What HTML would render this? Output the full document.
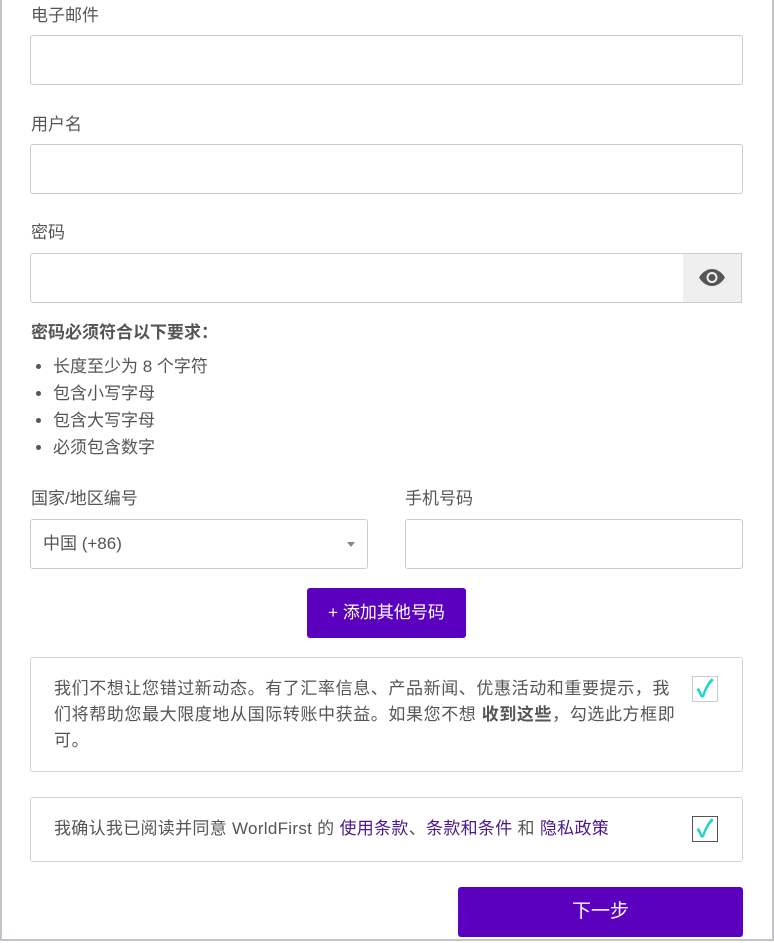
<!DOCTYPE html>
<html><head><meta charset="utf-8"><style>
body{margin:0;width:774px;height:943px;overflow:hidden;background:#fff;font-family:"Liberation Sans","Noto Sans CJK SC",sans-serif;color:#555;font-size:17px;position:relative}
.frame{position:absolute;left:0;top:0;width:770px;height:939px;border:2px solid #c4c3cc;border-top:none}
.a{position:absolute;line-height:20px}
.in{position:absolute;border:1px solid #ccc;border-radius:3px;box-sizing:border-box;background:#fff}
.box{position:absolute;border:1px solid #d4d4d4;border-radius:3px;box-sizing:border-box;left:30px;width:713px}
.cb{position:absolute;width:26px;height:26px;border:1px solid #ccc;box-sizing:border-box;color:#1dd6c8;font-size:24px;line-height:26px;text-align:center;font-weight:bold}
.btn{position:absolute;background:#5c00bf;color:#fff;border-radius:3px;text-align:center}
a{color:#4a1a8c;text-decoration:none}
li{line-height:27px}
</style></head><body>
<div class="frame"></div>
<div class="a" style="left:31px;top:6px">电子邮件</div>
<div class="in" style="left:30px;top:35px;width:713px;height:50px"></div>
<div class="a" style="left:31px;top:115px">用户名</div>
<div class="in" style="left:30px;top:144px;width:713px;height:50px"></div>
<div class="a" style="left:31px;top:223px">密码</div>
<div class="in" style="left:30px;top:253px;width:654px;height:50px;border-radius:3px 0 0 3px"></div>
<div style="position:absolute;left:683px;top:253px;width:59px;height:50px;background:#efefef;border:1px solid #ccc;box-sizing:border-box;border-left:none">
<svg width="59" height="48" viewBox="0 0 59 48"><path d="M16 23.5C20 17 25 15 29 15s9 2 13 8.5C38 30 33 32 29 32s-9-2-13-8.5z" fill="#555"/><circle cx="29" cy="23.5" r="5.5" fill="#efefef"/><circle cx="29" cy="23.5" r="3.5" fill="#555"/></svg></div>
<div class="a" style="left:31px;top:323px;font-weight:bold">密码必须符合以下要求：</div>
<ul style="position:absolute;left:31px;top:353px;margin:0;padding:0 0 0 22px;list-style:disc">
<li>长度至少为 8 个字符</li><li>包含小写字母</li><li>包含大写字母</li><li>必须包含数字</li></ul>
<div class="a" style="left:31px;top:489px">国家/地区编号</div>
<div class="a" style="left:405px;top:489px">手机号码</div>
<div class="in" style="left:30px;top:519px;width:338px;height:50px"><span style="position:absolute;left:12px;top:14px;line-height:20px">中国 (+86)</span><span style="position:absolute;right:12px;top:22px;border:4px solid transparent;border-top:5px solid #888"></span></div>
<div class="in" style="left:405px;top:519px;width:338px;height:50px"></div>
<div class="btn" style="left:307px;top:588px;width:159px;height:50px;line-height:50px">+ 添加其他号码</div>
<div class="box" style="top:657px;height:115px">
<div class="a" style="left:23px;top:18px;width:632px;line-height:26px;letter-spacing:0.6px">我们不想让您错过新动态。有了汇率信息、产品新闻、优惠活动和重要提示，我们将帮助您最大限度地从国际转账中获益。如果您不想 <b>收到这些</b>，勾选此方框即可。</div>
<div class="cb" style="left:661px;top:18px">✓</div></div>
<div class="box" style="top:797px;height:65px">
<div class="a" style="left:23px;top:21px;letter-spacing:0.3px">我确认我已阅读并同意 WorldFirst 的 <a>使用条款</a>、<a>条款和条件</a> 和 <a>隐私政策</a></div>
<div class="cb" style="left:661px;top:18px;border-color:#555">✓</div></div>
<div class="btn" style="left:458px;top:887px;width:285px;height:50px;line-height:50px;font-size:19px">下一步</div>
</body></html>
